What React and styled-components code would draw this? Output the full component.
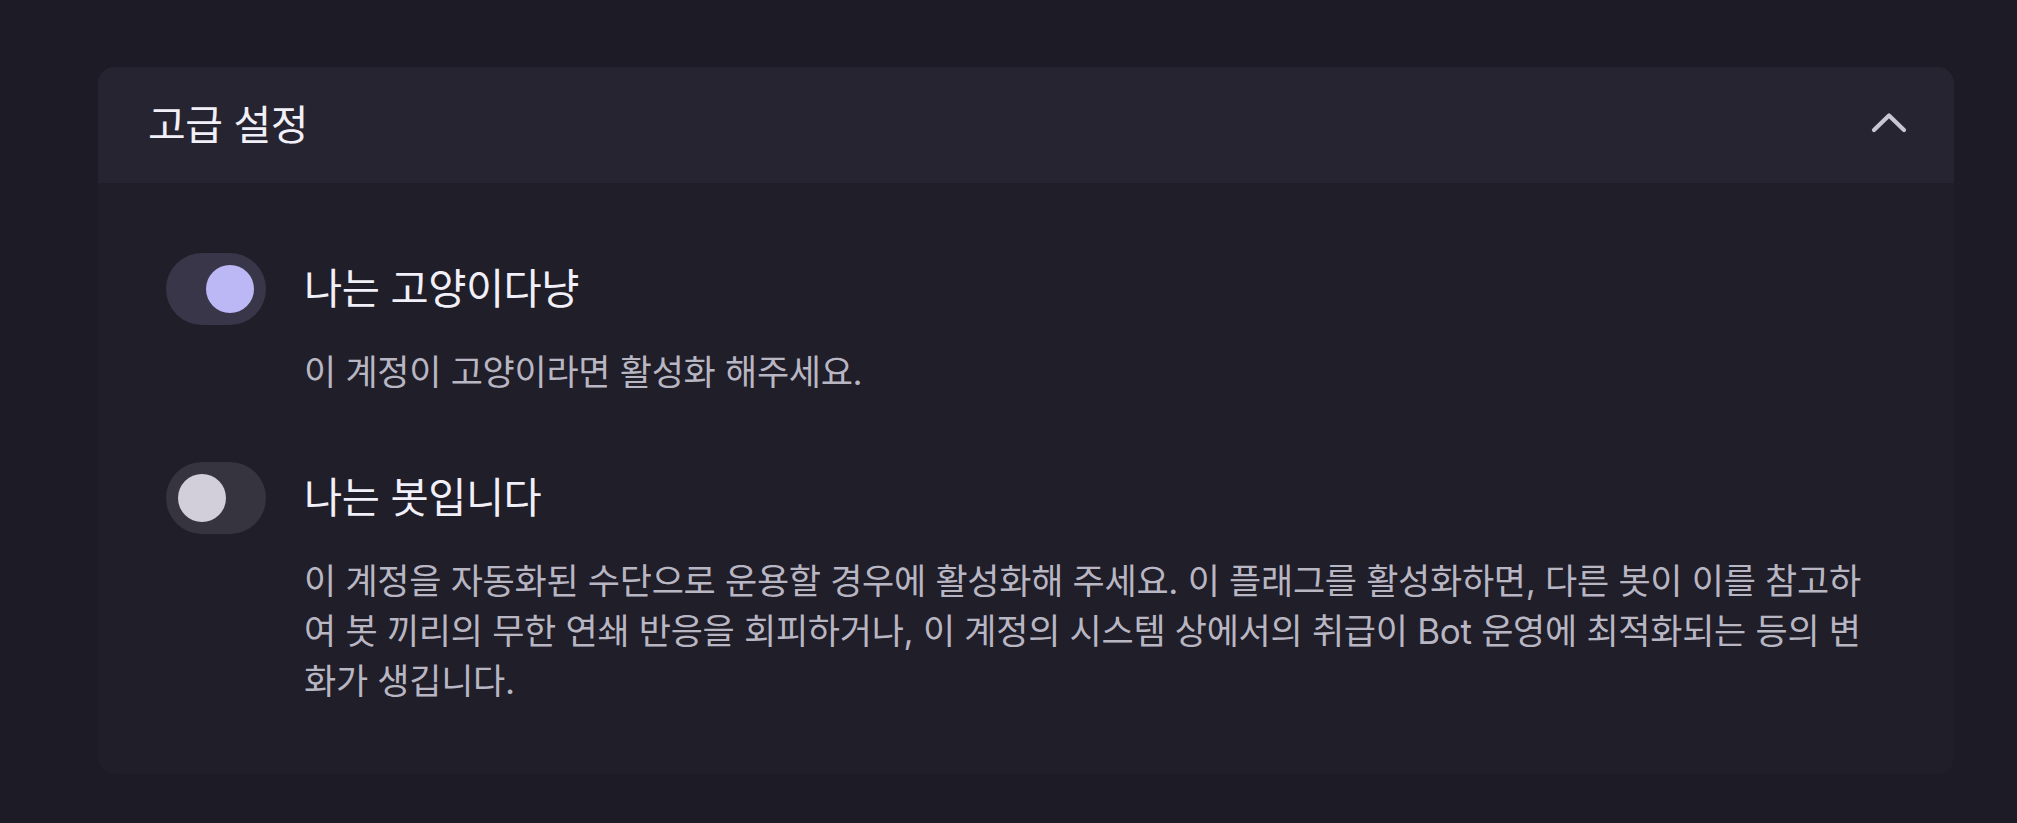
import styled, { createGlobalStyle } from "styled-components";
import { useState } from "react";

const GlobalStyle = createGlobalStyle`
  html, body {
    margin: 0;
    padding: 0;
    background: #1d1b25;
  }
  body {
    font-family: Inter, "Noto Sans CJK KR", sans-serif;
  }
`;

const Page = styled.div`
  min-height: 823px;
  padding: 67px 63px 40px 98px;
  box-sizing: border-box;
`;

const Card = styled.section`
  background: #201e29;
  border-radius: 16px;
  overflow: hidden;
`;

const Header = styled.button`
  display: flex;
  align-items: center;
  justify-content: space-between;
  width: 100%;
  height: 116px;
  padding: 0 47px 6px 50px;
  box-sizing: border-box;
  background: #262430;
  border: none;
  cursor: pointer;
  font-family: inherit;
`;

const HeaderTitle = styled.span`
  color: #f1eff8;
  font-size: 41px;
  letter-spacing: -0.5px;
`;

const Body = styled.div`
  display: flex;
  flex-direction: column;
  gap: 65px;
  padding: 70px 40px 68px 68px;
`;

const Row = styled.div`
  display: flex;
  align-items: flex-start;
  gap: 38px;
`;

const Track = styled.button`
  position: relative;
  flex: none;
  width: 100px;
  height: 72px;
  border-radius: 36px;
  border: none;
  padding: 0;
  cursor: pointer;
  background: ${(p) => (p.$on ? "#383648" : "#36343f")};
`;

const Knob = styled.span`
  position: absolute;
  top: 12px;
  left: ${(p) => (p.$on ? "40px" : "12px")};
  width: 48px;
  height: 48px;
  border-radius: 50%;
  background: ${(p) => (p.$on ? "#bcb8f6" : "#d3cfda")};
`;

const Text = styled.div`
  display: flex;
  flex-direction: column;
`;

const Title = styled.div`
  color: #f1eff8;
  font-size: 41.5px;
  line-height: 72px;
  letter-spacing: -0.5px;
`;

const Desc = styled.p`
  margin: 22px 0 0;
  color: #b9b6c3;
  font-size: 35px;
  line-height: 50px;
  letter-spacing: -0.3px;
  white-space: nowrap;
`;

const Chevron = () => (
  <svg width="36" height="21" viewBox="0 0 36 21" fill="none">
    <polyline
      points="3,18 18,3.5 33,18"
      stroke="#c9c6d3"
      strokeWidth="4.2"
      strokeLinecap="round"
      strokeLinejoin="round"
    />
  </svg>
);

const Toggle = ({ on, onClick }) => (
  <Track $on={on} onClick={onClick}>
    <Knob $on={on} />
  </Track>
);

const App = () => {
  const [cat, setCat] = useState(true);
  const [bot, setBot] = useState(false);

  return (
    <Page>
      <GlobalStyle />
      <Card>
        <Header>
          <HeaderTitle>고급 설정</HeaderTitle>
          <Chevron />
        </Header>
        <Body>
          <Row>
            <Toggle on={cat} onClick={() => setCat(!cat)} />
            <Text>
              <Title>나는 고양이다냥</Title>
              <Desc>이 계정이 고양이라면 활성화 해주세요.</Desc>
            </Text>
          </Row>
          <Row>
            <Toggle on={bot} onClick={() => setBot(!bot)} />
            <Text>
              <Title>나는 봇입니다</Title>
              <Desc>
                이 계정을 자동화된 수단으로 운용할 경우에 활성화해 주세요. 이 플래그를 활성화하면, 다른 봇이 이를 참고하
                <br />
                여 봇 끼리의 무한 연쇄 반응을 회피하거나, 이 계정의 시스템 상에서의 취급이 Bot 운영에 최적화되는 등의 변
                <br />
                화가 생깁니다.
              </Desc>
            </Text>
          </Row>
        </Body>
      </Card>
    </Page>
  );
};

export default App;
